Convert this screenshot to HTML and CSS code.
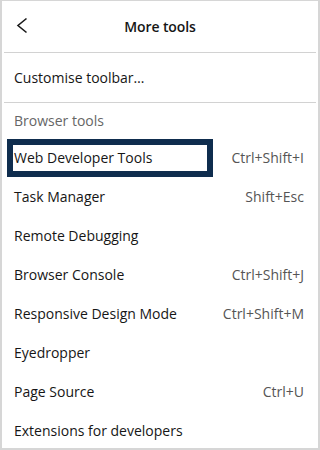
FILE: index.html
```html
<!DOCTYPE html>
<html>
<head>
<meta charset="utf-8">
<link rel="stylesheet" href="styles.css">
</head>
<body>
<div class="panel">
  <div class="header">
    <svg class="back" width="12" height="17" viewBox="0 0 12 17"><path d="M10.5 1.5 L2 8.5 L10.5 15.5" fill="none" stroke="#1a1a1a" stroke-width="1.6"/></svg>
    <div class="title">More tools</div>
  </div>
  <div class="divider"></div>
  <div class="row top-row"><span class="label">Customise toolbar…</span></div>
  <div class="divider"></div>
  <div class="section">Browser tools</div>
  <div class="row focused"><span class="label">Web Developer Tools</span><span class="key">Ctrl+Shift+I</span></div>
  <div class="row"><span class="label">Task Manager</span><span class="key">Shift+Esc</span></div>
  <div class="row"><span class="label">Remote Debugging</span></div>
  <div class="row"><span class="label">Browser Console</span><span class="key">Ctrl+Shift+J</span></div>
  <div class="row"><span class="label">Responsive Design Mode</span><span class="key">Ctrl+Shift+M</span></div>
  <div class="row"><span class="label">Eyedropper</span></div>
  <div class="row"><span class="label">Page Source</span><span class="key">Ctrl+U</span></div>
  <div class="row"><span class="label">Extensions for developers</span></div>
</div>
</body>
</html>
```
FILE: styles.css
```css
html, body {
  margin: 0;
  padding: 0;
  background: #fff;
}
body {
  font-family: "Open Sans", "Noto Sans", sans-serif;
  font-size: 14px;
  color: #161616;
}
.panel {
  box-sizing: border-box;
  width: 320px;
  height: 450px;
  border: 2px solid #d6d6d6;
  border-top-width: 1px;
  padding: 0 2px;
  overflow: hidden;
  background: #fff;
}
.header {
  height: 51px;
  display: flex;
  align-items: center;
  justify-content: center;
  position: relative;
}
.back {
  position: absolute;
  left: 12px;
  top: 16px;
}
.title {
  font-weight: 600;
  font-size: 14px;
  letter-spacing: -0.1px;
}
.divider {
  height: 1px;
  background: #d2d2d2;
}
.row {
  height: 39px;
  display: flex;
  align-items: center;
  justify-content: space-between;
  padding: 0 12px 0 10px;
  position: relative;
}
.top-row {
  height: 49px;
}
.section {
  height: 35px;
  display: flex;
  align-items: center;
  padding: 0 10px;
  color: #666;
}
.key {
  color: #555;
}
.focused::before {
  content: "";
  position: absolute;
  left: 3px;
  top: 1px;
  width: 194px;
  height: 26px;
  border: 6px solid #0f2d4e;
}
.label, .key {
  position: relative;
}
```
